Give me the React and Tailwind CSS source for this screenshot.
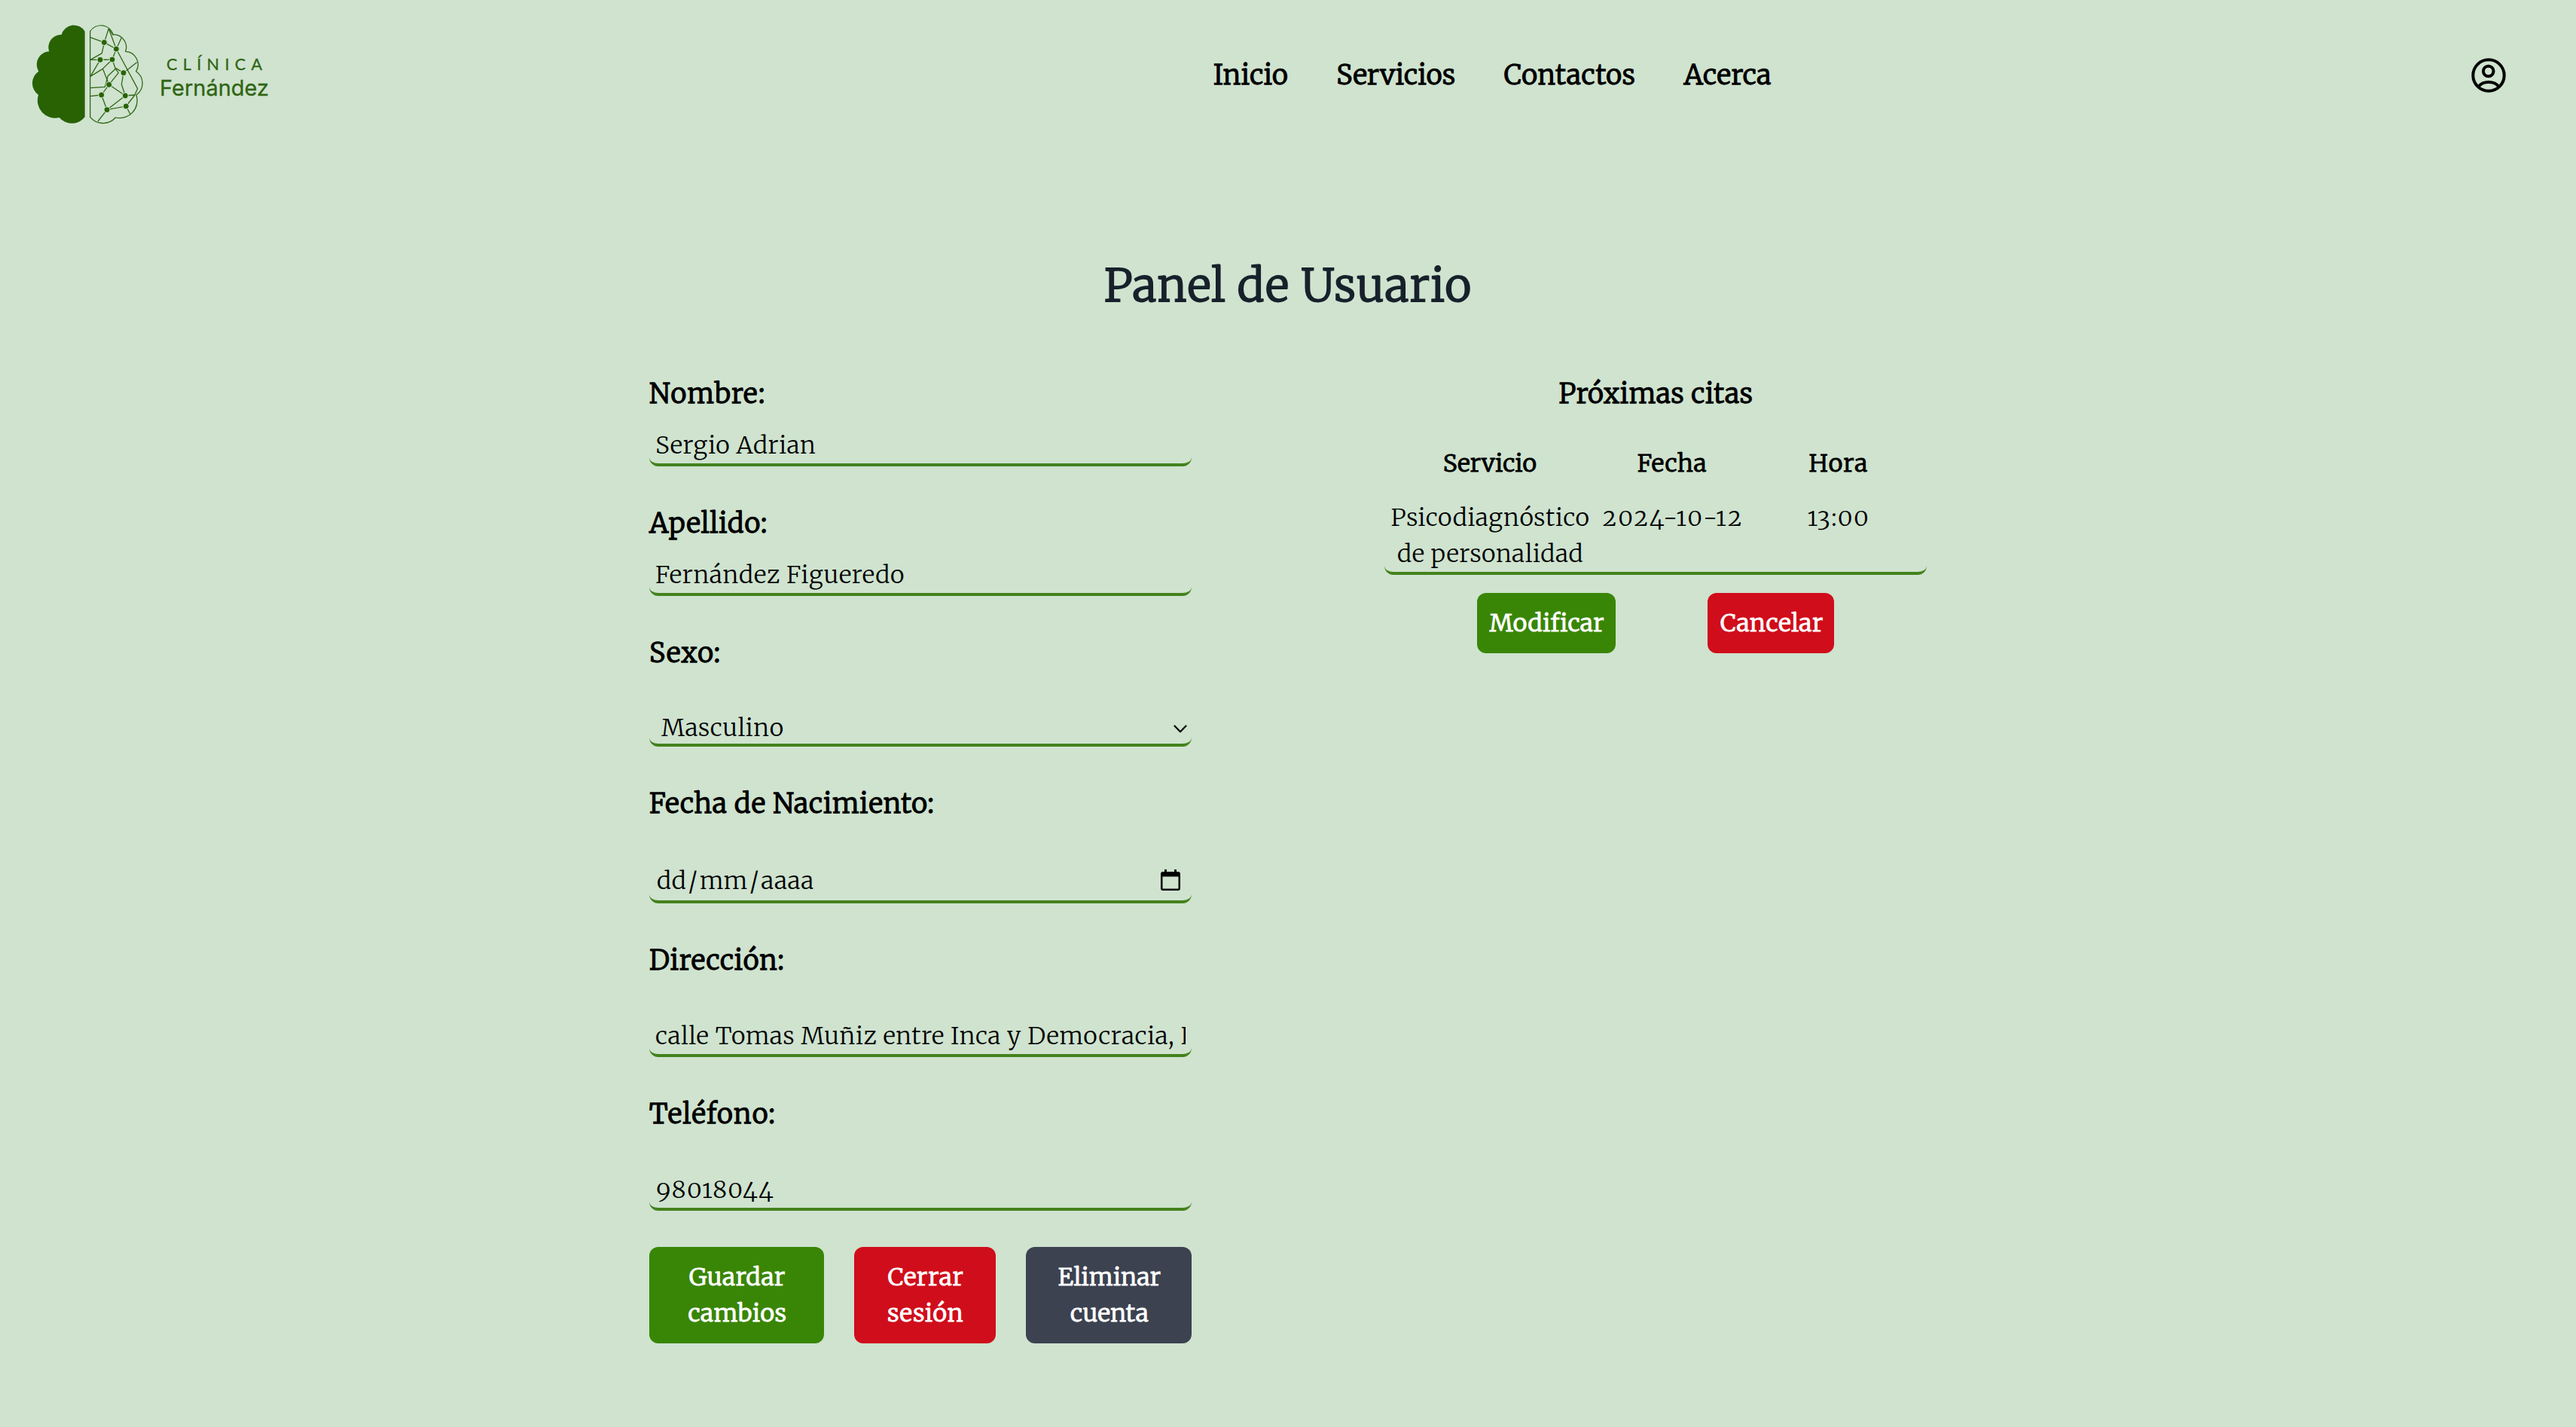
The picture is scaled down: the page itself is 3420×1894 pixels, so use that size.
import React from "react";

function BrainLogo() {
  return (
    <svg className="mb-[3px] h-[145px] w-[160px]" viewBox="0 0 480 435" fill="none">
      <path
        fill="#286203"
        d="M230 47A51 51 0 0 0 137 60A50 50 0 0 0 88 127A52 52 0 0 0 46 206A57 57 0 0 0 45 300A70 70 0 0 0 128 390A66 66 0 0 0 230 388Z"
      />
      <g stroke="#2f6513" strokeWidth="3.8" strokeLinejoin="round">
        <path d="M251 47A51 51 0 0 1 343 60A50 50 0 0 1 392 127A52 52 0 0 1 434 206A57 57 0 0 1 435 300A70 70 0 0 1 352 390A66 66 0 0 1 251 388Z" />
        <path d="M252 71L307 91L325 36L355 117L307 91L298 134L252 160H291L339 159L355 117L376 72" />
        <path d="M325 36L343 62" />
        <path d="M291 160L252 226L300 197L339 159L352 196L364 212L326 259L302 197" />
        <path d="M355 117L440 275L427 303L394 345L410 375" />
        <path d="M437 170L384 212L354 194L322 224L310 268L252 272" />
        <path d="M384 212L376 258L391 303L326 259L296 300L252 305M296 300L318 359L282 405" />
        <path d="M318 359L391 303L430 300M318 359L394 345" />
      </g>
      <g fill="#286203" stroke="#cfe3cf" strokeWidth="3">
        <circle cx="307" cy="91" r="12" />
        <circle cx="355" cy="117" r="12" />
        <circle cx="291" cy="160" r="12" />
        <circle cx="339" cy="159" r="12" />
        <circle cx="384" cy="212" r="12" />
        <circle cx="326" cy="259" r="12" />
        <circle cx="296" cy="300" r="12" />
        <circle cx="391" cy="303" r="12" />
        <circle cx="394" cy="345" r="12" />
        <circle cx="318" cy="359" r="12" />
      </g>
    </svg>
  );
}

function UserIcon() {
  return (
    <svg className="size-12" viewBox="0 0 48 48" fill="none" stroke="black" strokeWidth="4">
      <circle cx="24" cy="24" r="20.7" />
      <circle cx="23.7" cy="18.5" r="6.8" />
      <path d="M10.3 39.2C13.2 35.2 18 32.9 24 32.9S34.8 35.2 37.7 39.2" />
    </svg>
  );
}

function ChevronIcon() {
  return (
    <svg className="mt-[5px] h-[11px] w-[18px]" viewBox="0 0 18 11" fill="none" stroke="black" strokeWidth="2.2" strokeLinecap="round" strokeLinejoin="round">
      <path d="M1.5 1.5L9 9.2L16.5 1.5" />
    </svg>
  );
}

function CalendarIcon() {
  return (
    <svg className="mb-0.5 h-7 w-[26px]" viewBox="0 0 26 28">
      <path d="M5 0H8V3H18V0H21V3H23A3 3 0 0 1 26 6V25A3 3 0 0 1 23 28H3A3 3 0 0 1 0 25V6A3 3 0 0 1 3 3H5ZM2.5 9.5V25.5H23.5V9.5Z" fillRule="evenodd" />
    </svg>
  );
}

function Field({ label, labelClass, fieldClass, children }) {
  return (
    <div>
      <div className={`text-[36px] leading-[56px] [-webkit-text-stroke:1.3px_currentColor] ${labelClass}`}>{label}</div>
      <div className={`flex items-center justify-between overflow-hidden whitespace-nowrap rounded-xl border-b-4 border-[#43821c] ${fieldClass}`}>
        {children}
      </div>
    </div>
  );
}

function Button({ className, children }) {
  return (
    <button className={`rounded-xl py-4 pl-0.5 text-center text-white [-webkit-text-stroke:1.1px_currentColor] ${className}`}>
      {children}
    </button>
  );
}

export default function App() {
  return (
    <div className="min-h-screen bg-[#cfe3cf] font-[Merriweather,'Noto_Serif','DejaVu_Serif',serif] font-light text-black [font-feature-settings:'onum']">
      <header className="flex h-[200px] items-center pl-9 pr-[92px]">
        <BrainLogo />
        <div className="ml-4 w-40 pt-1.5 font-normal text-[#2f6513]">
          <div className="pl-[9px] font-[Lato,sans-serif] text-[21.5px] leading-[28px] tracking-[7.4px] [-webkit-text-stroke:0.3px_currentColor]">CLÍNICA</div>
          <div className="font-[Inter,sans-serif] text-[29px] leading-[36px] [-webkit-text-stroke:0.3px_currentColor]">Fernández</div>
        </div>
        <nav className="ml-[1239px] flex gap-16 text-[36px] leading-[56px] [-webkit-text-stroke:1.3px_currentColor]">
          <a className="tracking-[0.48px]">Inicio</a>
          <a className="tracking-[0.42px]">Servicios</a>
          <a className="tracking-[0.75px]">Contactos</a>
          <a className="tracking-[0.67px]">Acerca</a>
        </nav>
        <div className="ml-auto">
          <UserIcon />
        </div>
      </header>

      <main className="pt-[143px]">
        <h1 className="text-center text-[60px] leading-[72px] tracking-[1.13px] text-[#17212b] [-webkit-text-stroke:1.8px_currentColor]">
          Panel de Usuario
        </h1>

        <div className="mx-auto mt-20 flex w-[1696px] justify-between text-[32px] leading-[48px]">
          <section className="flex w-[720px] flex-col gap-12">
            <Field label="Nombre:" labelClass="tracking-[1.27px]" fieldClass="mt-4 px-2">
              <span className="tracking-[0.49px]">Sergio Adrian</span>
            </Field>
            <Field label="Apellido:" labelClass="tracking-[0.91px]" fieldClass="mt-4 px-2">
              <span className="tracking-[0.65px]">Fernández Figueredo</span>
            </Field>
            <Field label="Sexo:" labelClass="tracking-[1.3px]" fieldClass="mt-[47px] h-[49px] pl-4 pr-[6px]">
              <span className="pt-0.5 tracking-[0.55px]">Masculino</span>
              <ChevronIcon />
            </Field>
            <Field label="Fecha de Nacimiento:" labelClass="tracking-[0.88px]" fieldClass="mt-[50px] h-[54px] pb-0.5 pl-2.5 pr-[15px]">
              <span className="tracking-[0.5px]">
                dd<span className="px-[2.5px]">/</span>mm<span className="px-[2.5px]">/</span>aaaa
              </span>
              <CalendarIcon />
            </Field>
            <Field label="Dirección:" labelClass="tracking-[0.89px]" fieldClass="mt-12 px-2">
              <span className="overflow-hidden tracking-[0.59px]">calle Tomas Muñiz entre Inca y Democracia, R</span>
            </Field>
            <Field label="Teléfono:" labelClass="tracking-[1.29px]" fieldClass="mt-12 px-2">
              <span className="pl-px tracking-[1.45px]">98018044</span>
            </Field>
            <div className="flex gap-10">
              <Button className="w-[232px] bg-[#398606] tracking-[0.76px]">
                Guardar
                <br />
                cambios
              </Button>
              <Button className="w-[188px] bg-[#d00d1b] tracking-[0.9px]">
                Cerrar
                <br />
                sesión
              </Button>
              <Button className="w-[220px] bg-[#3c4250] tracking-[0.4px]">
                Eliminar
                <br />
                cuenta
              </Button>
            </div>
          </section>

          <section className="w-[720px] text-center">
            <h2 className="pl-px text-[36px] leading-[56px] tracking-[0.66px] [-webkit-text-stroke:1.3px_currentColor]">Próximas citas</h2>
            <div className="mt-10 grid grid-cols-[280px_204px_236px] [-webkit-text-stroke:1.1px_currentColor]">
              <div className="tracking-[0.33px]">Servicio</div>
              <div className="tracking-[0.83px]">Fecha</div>
              <div className="pl-0.5 tracking-[1.4px]">Hora</div>
            </div>
            <div className="mt-6 grid grid-cols-[280px_204px_236px] rounded-xl border-b-4 border-[#43821c]">
              <div className="pl-px tracking-[0.5px]">
                Psicodiagnóstico
                <br />
                de personalidad
              </div>
              <div className="whitespace-nowrap pl-[3px] tracking-[2.65px]">2024-10-12</div>
              <div className="pl-0.5 tracking-[1.7px]">13:00</div>
            </div>
            <div className="mt-6 flex justify-evenly">
              <Button className="w-[184px] bg-[#398606] tracking-[0.48px]">Modificar</Button>
              <Button className="w-[168px] bg-[#d00d1b] tracking-[0.75px]">Cancelar</Button>
            </div>
          </section>
        </div>
      </main>
    </div>
  );
}
